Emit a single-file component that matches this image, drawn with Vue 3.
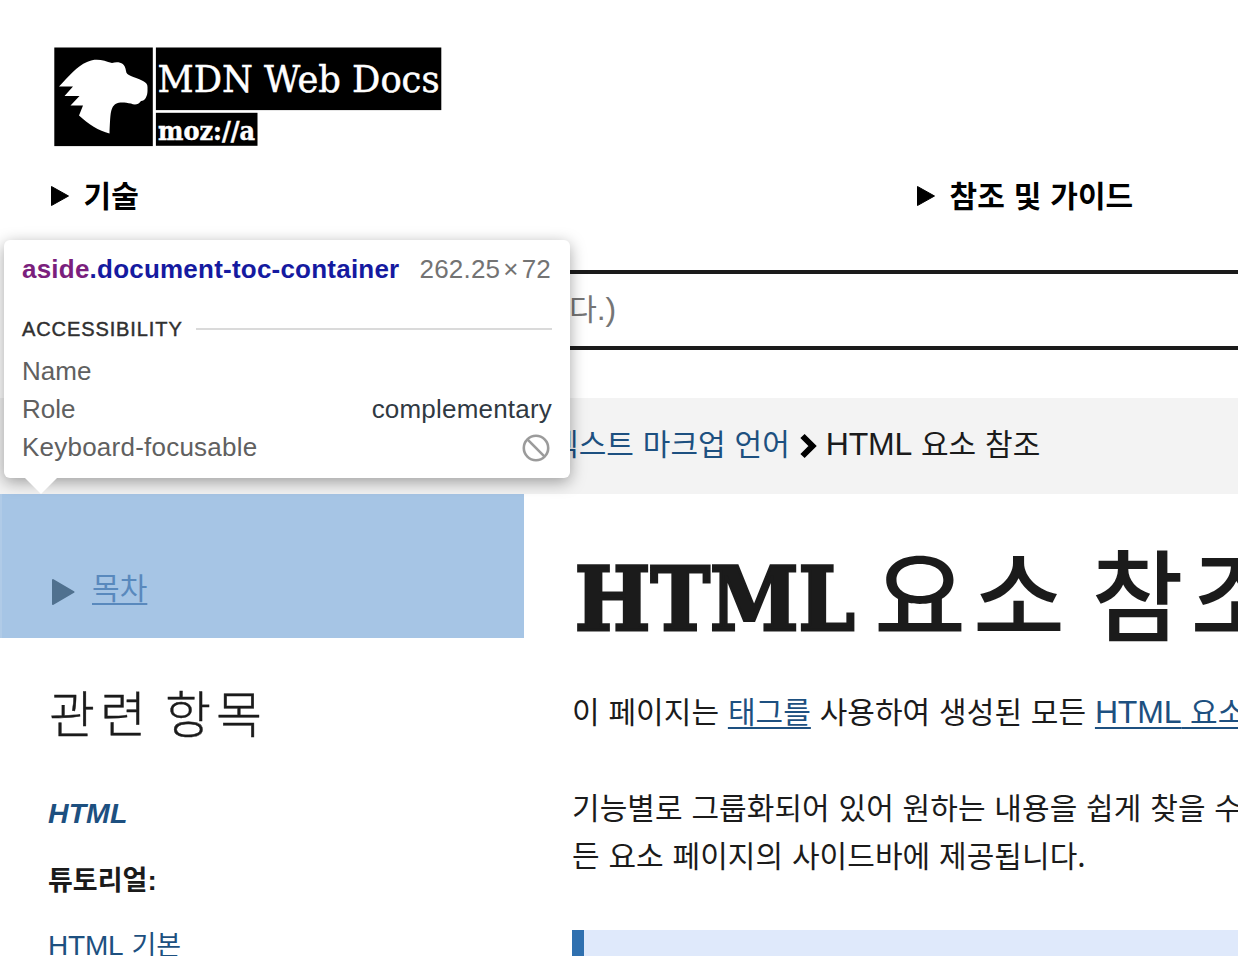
<script setup>
const navItems = ['기술', '참조 및 가이드']
</script>

<template>
  <div class="page">
    <header class="header">
      <svg class="logo" width="388" height="100" viewBox="0 0 388 100">
        <rect x="0.3" y="0.5" width="98.5" height="98.6" fill="#000" />
        <rect x="101.9" y="0.5" width="285.4" height="62.6" fill="#000" />
        <rect x="101.9" y="65.8" width="101.6" height="33" fill="#000" />
        <path
          d="M5 39.500C14 30 23 19 33 15C43 10.500 50 14 58 16C64 14.500 71 15 72 24C72.500 29 79 29 89 34C92 35.500 93.500 37 93.500 40V44C93.500 49 91 54 87 54C84.500 58 80 58 77 56.500C71 55.500 66 54.500 61.500 57C56 61 56.500 68 55.500 86.500C45 84 34 77 25 68.500L29 58.500H16.500L25.500 49H10.500L19 39.500Z"
          fill="#fff"
        />
        <text class="slab" x="103.500" y="44.500" font-size="37" textLength="282" lengthAdjust="spacingAndGlyphs">MDN Web Docs</text>
        <text class="slab bold" x="104" y="92.500" font-size="25.500" textLength="97" lengthAdjust="spacingAndGlyphs">moz://a</text>
      </svg>
      <nav class="nav">
        <div v-for="item in navItems" :key="item" class="nav-item">
          <svg width="20" height="22" viewBox="0 0 20 22"><path d="M1.500 1.500L18.500 11L1.500 20.500Z" stroke="#000" stroke-linejoin="round" /></svg>
          <span>{{ item }}</span>
        </div>
      </nav>
    </header>

    <div class="search"><span class="placeholder">다<span class="latin">.)</span></span></div>

    <div class="crumbs">
      <a>텍스트 마크업 언어</a>
      <svg class="chevron" width="18" height="26" viewBox="0 0 18 26"><path d="M2.500 3L12.500 13L2.500 23" fill="none" stroke="#000" stroke-width="6" /></svg>
      <span><span class="latin">HTML</span> 요소 참조</span>
    </div>

    <div class="columns">
      <div class="sidebar">
        <aside class="toc">
          <svg width="24" height="28" viewBox="0 0 24 28"><path d="M2 2L22.500 14L2 26Z" fill="#50718f" stroke="#50718f" stroke-linejoin="round" stroke-width="2" /></svg>
          <a>목차</a>
        </aside>
        <div class="related">
          <h2>관련 항목</h2>
          <a class="topic">HTML</a>
          <strong>튜토리얼<span class="latin">:</span></strong>
          <a class="lesson"><span class="latin">HTML</span> 기본</a>
        </div>
      </div>

      <main class="article">
        <h1><span class="h1-latin">HTML</span><span class="h1-korean">요소 참조</span></h1>
        <p>이 페이지는 <a>태그를</a> 사용하여 생성된 모든 <a><span class="latin">HTML</span> 요소</a></p>
        <p>기능별로 그룹화되어 있어 원하는 내용을 쉽게 찾을 수<br />든 요소 페이지의 사이드바에 제공됩니다.</p>
        <div class="note"></div>
      </main>
    </div>

    <div class="tooltip">
      <div class="selector">
        <b><span class="tag">aside</span>.document-toc-container</b>
        <span class="size">262.25<i>×</i>72</span>
      </div>
      <div class="section"><span>ACCESSIBILITY</span></div>
      <div class="row"><span>Name</span></div>
      <div class="row"><span>Role</span><span class="value">complementary</span></div>
      <div class="row">
        <span class="focusable">Keyboard-focusable</span>
        <svg width="30" height="30" viewBox="0 0 30 30" fill="none" stroke="#9b9b9b" stroke-width="2.600"><circle cx="14" cy="16" r="12.200" /><path d="M5.400 7.400L22.600 24.600" /></svg>
      </div>
      <svg class="arrow" width="32" height="16" viewBox="0 0 32 16"><path d="M0 0H32L16 16Z" fill="#fff" /></svg>
    </div>
  </div>
</template>

<style>
body { background: #fff; }
</style>

<style scoped>
* { box-sizing: border-box; }
.page {
  position: relative;
  width: 1238px;
  height: 956px;
  overflow: hidden;
  color: #1b1b1b;
  font: 30px/48px "Noto Sans CJK KR", sans-serif;
  letter-spacing: 0.06px;
  word-spacing: 2px;
  white-space: nowrap;
}
svg { display: block; flex: none; }
.latin { font: 32px/1 "Liberation Sans", sans-serif; letter-spacing: -0.2px; word-spacing: 0; }
a { color: #1d5080; }
.header { height: 270px; padding-top: 47px; }
.logo { margin-left: 54px; letter-spacing: 0; word-spacing: 0; overflow: visible; }
.slab { font-family: "DejaVu Serif", serif; fill: #fff; stroke: #fff; stroke-width: 0.5px; }
.bold { font-weight: 700; }
.nav { display: grid; grid-template-columns: 866px 1fr; padding: 25px 0 0 50px; color: #000; font-weight: 700; }
.nav-item { display: flex; align-items: center; gap: 13.5px; height: 48px; }
.nav-item span { margin-top: -4px; }
.search {
  display: flex;
  align-items: center;
  height: 80px;
  margin-left: 48px;
  padding-bottom: 7px;
  border: 4px solid #1b1b1b;
  border-right: 0;
  color: #757575;
}
.placeholder { width: 564px; text-align: right; }
.crumbs { display: flex; align-items: center; height: 96px; margin-top: 48px; padding: 0 0 8px 551px; background: #f3f3f3; }
.chevron { margin: 8px 8px 0 10px; }
.columns { display: grid; grid-template-columns: 524px 1fr; }
.toc {
  display: flex;
  align-items: center;
  gap: 17px;
  height: 144px;
  padding: 52px 0 0 49px;
  border-left: 2px solid #b0cbe7;
  background: #a6c5e5;
}
.toc a { margin-top: -12px; color: #5989bd; }
.toc a, p a { text-decoration: underline; text-decoration-thickness: 2px; text-underline-offset: 4px; }
.related { display: flex; flex-direction: column; padding-left: 48px; }
h2 { height: 96px; margin: 25px 0 30px 1px; font-size: 50px; font-weight: 300; line-height: 96px; letter-spacing: 5px; word-spacing: -2px; -webkit-text-stroke: 0.4px #1b1b1b; }
.topic { font: italic bold 28.5px/48px "Liberation Sans", sans-serif; }
strong, .lesson { font-size: 27px; letter-spacing: 0; }
strong { margin-top: 18px; }
.lesson { margin-top: 17px; }
strong .latin { font-size: 28px; font-weight: 700; }
.lesson .latin { font-size: 28px; }
.article { padding-left: 48px; overflow: hidden; }
h1 { display: flex; height: 146px; margin: 24px 0 22px; line-height: 146px; }
.h1-latin {
  width: 302px;
  padding: 9px 0 0 3px;
  font-family: "DejaVu Serif", serif;
  font-size: 87px;
  letter-spacing: 0;
  transform: scaleX(0.92);
  transform-origin: left;
  -webkit-text-stroke: 3px #1b1b1b;
}
.h1-korean { font-size: 100px; font-weight: 500; letter-spacing: 7px; word-spacing: -10px; }
p { margin: 0 0 48px; }
.note { height: 80px; margin-top: 52px; border-left: 12px solid #2f70af; background: #dfe9fb; }
.tooltip {
  position: absolute;
  left: 4px;
  top: 240px;
  width: 566px;
  height: 238px;
  padding: 10px 18px;
  border-radius: 6px;
  background: #fff;
  box-shadow: 0 4px 16px rgba(0, 0, 0, 0.36);
  color: #606060;
  font: 26px/38px "Liberation Sans", sans-serif;
  letter-spacing: 0;
  word-spacing: 0;
}
.selector, .row, .section { display: flex; align-items: center; justify-content: space-between; height: 38px; }
.selector b { color: #151aa0; letter-spacing: 0.22px; }
.tag { color: #7b1f7d; }
.size { margin-right: 1px; color: #737373; letter-spacing: 0.2px; }
.size i { margin: 0 3px; font-style: normal; }
.section { gap: 13px; height: 42px; margin: 20px 0 2px; color: #303030; font-size: 20px; letter-spacing: 0.9px; -webkit-text-stroke: 0.45px #303030; }
.section::after { content: ""; flex: 1; height: 2px; background: #dadada; }
.value { color: #303942; letter-spacing: 0.2px; }
.focusable { letter-spacing: 0.23px; }
.arrow { position: absolute; left: 21px; top: 238px; }
</style>
